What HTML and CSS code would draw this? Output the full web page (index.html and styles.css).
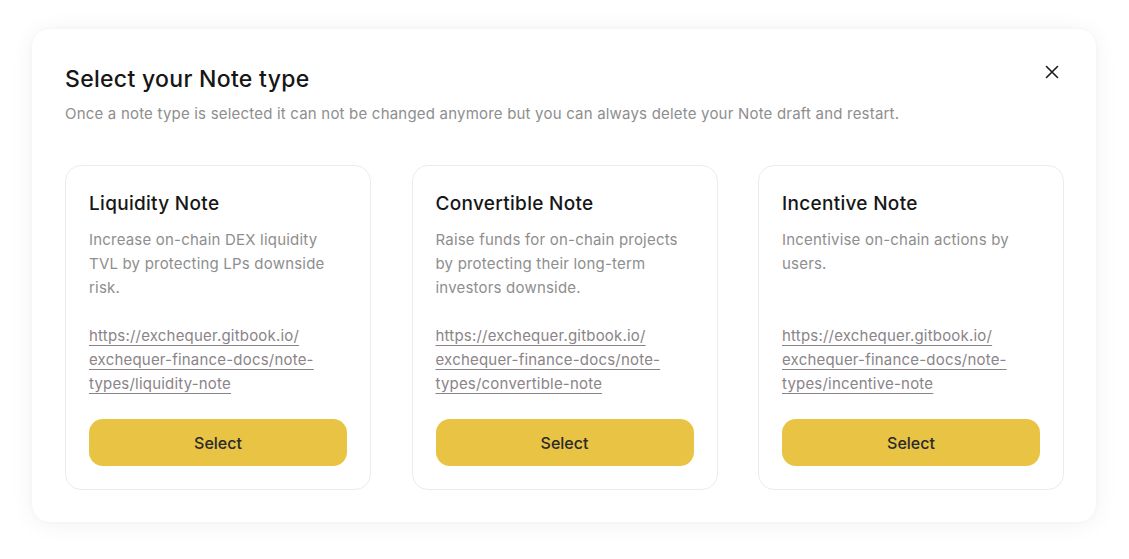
FILE: index.html
```html
<!DOCTYPE html>
<html>
<head>
<meta charset="utf-8">
<link rel="stylesheet" href="styles.css">
</head>
<body>
<div class="page">
  <div class="modal">
    <button class="close" aria-label="Close">
      <svg width="14" height="14" viewBox="0 0 14 14"><path d="M1.5 1.5 L12.5 12.5 M12.5 1.5 L1.5 12.5" stroke="#1a1a1a" stroke-width="1.6" stroke-linecap="round"/></svg>
    </button>
    <h1 class="title">Select your Note type</h1>
    <p class="subtitle">Once a note type is selected it can not be changed anymore but you can always delete your Note draft and restart.</p>
    <div class="cards">
      <div class="card">
        <h2 class="card-title">Liquidity Note</h2>
        <p class="card-desc">Increase on-chain DEX liquidity TVL by protecting LPs downside risk.</p>
        <a class="card-link" href="#">https://exchequer.gitbook.io/<br>exchequer-finance-docs/note-<br>types/liquidity-note</a>
        <div class="spacer"></div>
        <button class="select">Select</button>
      </div>
      <div class="card">
        <h2 class="card-title">Convertible Note</h2>
        <p class="card-desc">Raise funds for on-chain projects by protecting their long-term investors downside.</p>
        <a class="card-link" href="#">https://exchequer.gitbook.io/<br>exchequer-finance-docs/note-<br>types/convertible-note</a>
        <div class="spacer"></div>
        <button class="select">Select</button>
      </div>
      <div class="card">
        <h2 class="card-title">Incentive Note</h2>
        <p class="card-desc">Incentivise on-chain actions by users.</p>
        <a class="card-link" href="#">https://exchequer.gitbook.io/<br>exchequer-finance-docs/note-<br>types/incentive-note</a>
        <div class="spacer"></div>
        <button class="select">Select</button>
      </div>
    </div>
  </div>
</div>
</body>
</html>
```
FILE: styles.css
```css
* { box-sizing: border-box; }
html, body { margin: 0; padding: 0; background: #ffffff; }
body { font-family: "Inter", "Liberation Sans", sans-serif; width: 1129px; height: 559px; overflow: hidden; }
.page { padding: 29px 33px 0 32px; }
.modal {
  position: relative;
  width: 1064px;
  height: 493px;
  background: #fff;
  border-radius: 18px;
  box-shadow: 0 2px 24px rgba(30, 30, 60, 0.06), 0 0 4px rgba(30,30,60,0.03);
  padding: 35px 32px 32px 33px;
}
.close {
  position: absolute;
  top: 36px;
  right: 37px;
  width: 14px; height: 14px;
  padding: 0; border: 0; background: none;
  display: flex;
}
.title {
  margin: 0;
  font-size: 23px;
  font-weight: 500;
  color: #161616;
  line-height: 30px;
  letter-spacing: 0.3px;
}
.subtitle {
  margin: 9px 0 0 0;
  font-size: 15px;
  line-height: 22px;
  color: #8e8e8e;
  letter-spacing: 0.2px;
}
.cards {
  display: grid;
  grid-template-columns: repeat(3, 306px);
  column-gap: 40.5px;
  margin-top: 40px;
}
.card {
  height: 325px;
  border: 1px solid #ececec;
  border-radius: 16px;
  padding: 26px 23px 23px 23px;
  display: flex;
  flex-direction: column;
}
.card-title {
  margin: 0;
  font-size: 19px;
  font-weight: 500;
  line-height: 24px;
  color: #161616;
  letter-spacing: 0.3px;
}
.card-desc {
  margin: 12px 0 0 0;
  padding-right: 13px;
  font-size: 15px;
  line-height: 24px;
  color: #8e8e8e;
  min-height: 72px;
  letter-spacing: 0.2px;
}
.card-link {
  margin-top: 24px;
  font-size: 15px;
  line-height: 24px;
  color: #8a8488;
  letter-spacing: 0.2px;
  text-decoration: underline;
  text-underline-offset: 4px;
  text-decoration-thickness: 1px;
}
.spacer { flex: 1; }
.select {
  height: 47px;
  width: 100%;
  border: 0;
  border-radius: 14px;
  background: #e8c344;
  color: #2a2a2a;
  font-family: inherit;
  font-size: 16px;
  font-weight: 500;
}
```
